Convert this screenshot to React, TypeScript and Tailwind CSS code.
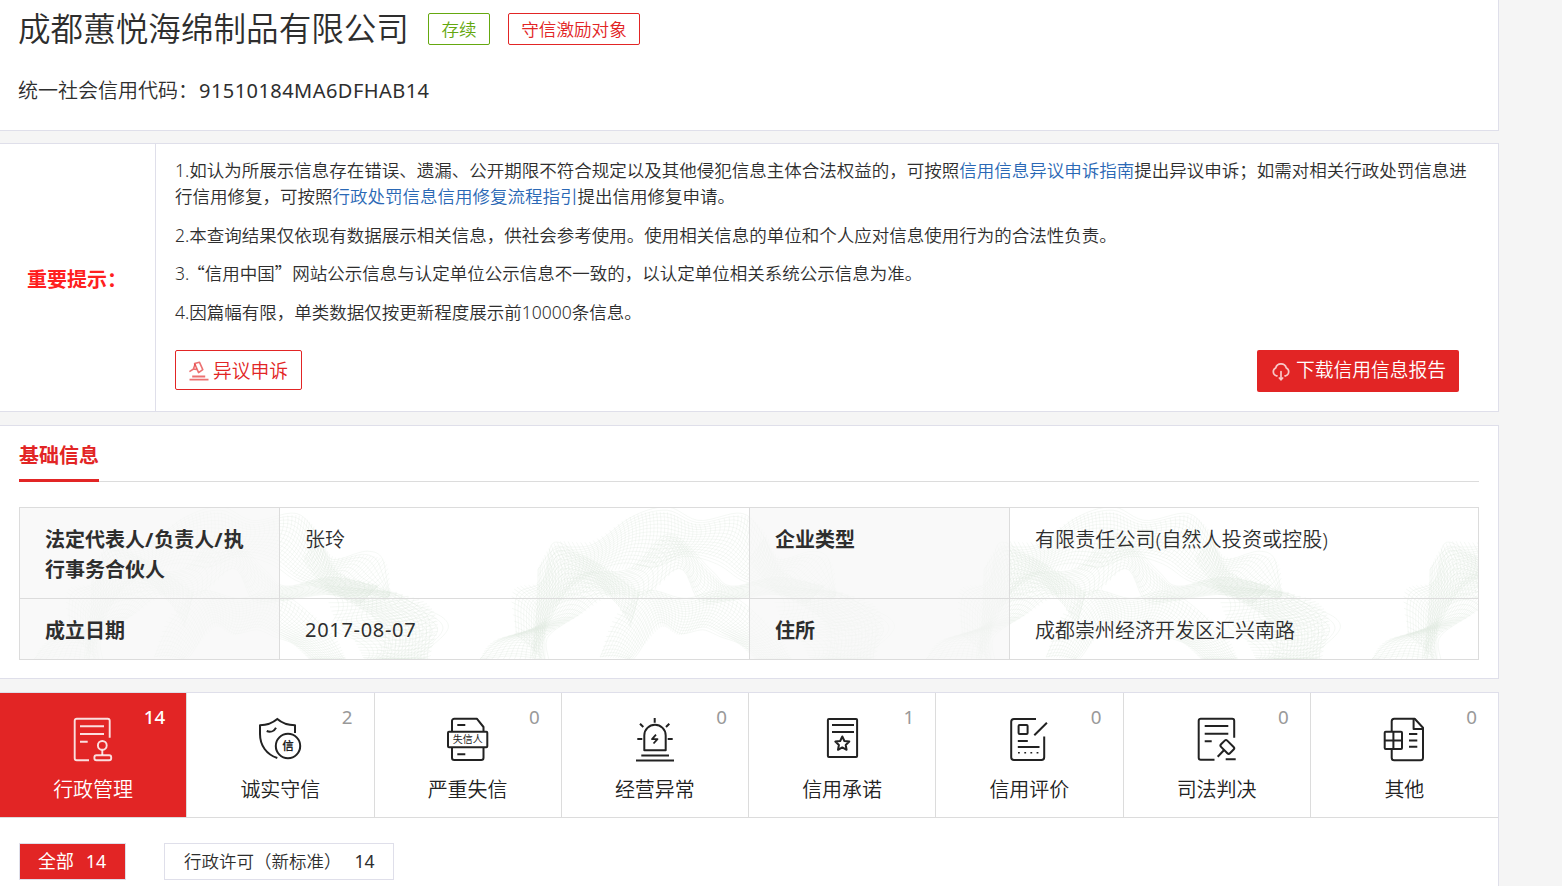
import type { ReactNode } from 'react'

interface Category {
    title: string
    count: number
    icon: ReactNode
}

type Point = [number, number]

interface Ribbon {
    outer: Point[]
    inner: Point[]
    lines: number
    ribs: number
}

// Guilloche ribbons, drawn on a 446 x 152 tile
const RIBBONS: Ribbon[] = [
    {
        outer: [[58, 62], [75, 36], [112, 34], [150, 10], [185, 5], [218, 17], [262, 8], [285, 26], [305, 64], [345, 78]],
        inner: [[52, 150], [80, 92], [110, 70], [142, 62], [172, 62], [205, 47], [240, 52], [265, 72], [290, 84], [325, 98]],
        lines: 15,
        ribs: 84,
    },
    {
        outer: [[0, 152], [14, 134], [60, 116], [95, 68], [150, 62], [190, 30], [230, 66], [252, 80], [300, 70], [360, 84], [400, 108], [396, 152]],
        inner: [[62, 152], [66, 130], [100, 108], [130, 90], [165, 90], [200, 62], [220, 92], [250, 92], [296, 86], [325, 100], [345, 120], [342, 152]],
        lines: 13,
        ribs: 90,
    },
    {
        outer: [[36, 128], [33, 84], [62, 74], [75, 42], [100, 48], [130, 62], [160, 84]],
        inner: [[62, 152], [66, 118], [75, 100], [95, 90], [120, 82], [136, 96], [150, 120]],
        lines: 12,
        ribs: 50,
    },
    {
        outer: [[120, 150], [135, 110], [165, 82], [205, 94], [240, 88], [275, 105], [300, 128], [312, 152]],
        inner: [[150, 152], [164, 138], [182, 120], [200, 128], [225, 120], [245, 128], [260, 138], [275, 152]],
        lines: 14,
        ribs: 64,
    },
    {
        outer: [[285, 30], [300, 50], [330, 48], [352, 56], [356, 88]],
        inner: [[270, 50], [285, 76], [300, 80], [320, 84], [352, 92]],
        lines: 10,
        ribs: 30,
    },
    {
        outer: [[290, 78], [300, 110], [318, 130], [330, 152]],
        inner: [[350, 84], [392, 96], [404, 122], [392, 152]],
        lines: 16,
        ribs: 26,
    },
]

function pointAt(points: Point[], t: number): Point {
    const last = points.length - 1
    const pos = Math.min(t * last, last - 0.0001)
    const i = Math.floor(pos)
    const f = pos - i
    const a = points[Math.max(i - 1, 0)]
    const b = points[i]
    const c = points[i + 1]
    const d = points[Math.min(i + 2, last)]
    const axis = (k: 0 | 1) =>
        0.5 *
        (2 * b[k] +
            (c[k] - a[k]) * f +
            (2 * a[k] - 5 * b[k] + 4 * c[k] - d[k]) * f * f +
            (3 * b[k] - a[k] - 3 * c[k] + d[k]) * f * f * f)
    return [axis(0), axis(1)]
}

function mix(a: Point, b: Point, k: number): Point {
    return [a[0] + (b[0] - a[0]) * k, a[1] + (b[1] - a[1]) * k]
}

function toPath(points: Point[]) {
    return 'M' + points.map(([x, y]) => `${x.toFixed(1)} ${y.toFixed(1)}`).join('L')
}

function ribbonPath({ outer, inner, lines, ribs }: Ribbon) {
    const paths: string[] = []
    for (let n = 0; n <= lines; n++) {
        const curve: Point[] = []
        for (let s = 0; s <= 60; s++) {
            const t = s / 60
            const k = n / lines + 0.12 * Math.sin(t * 9 + (n / lines) * 2)
            curve.push(mix(pointAt(outer, t), pointAt(inner, t), k))
        }
        paths.push(toPath(curve))
    }
    for (let n = 0; n <= ribs; n++) {
        const t = n / ribs
        const rib: Point[] = []
        for (let s = 0; s <= 8; s++) {
            const shift = Math.min(1, t + 0.02 * Math.sin((s / 8) * Math.PI))
            rib.push(mix(pointAt(outer, shift), pointAt(inner, shift), s / 8))
        }
        paths.push(toPath(rib))
    }
    return paths.join('')
}

const GUILLOCHE = RIBBONS.map(ribbonPath).join('')

function Watermark() {
    return (
        <svg className="absolute inset-0 h-full w-full" aria-hidden="true">
            <defs>
                <path id="guilloche" d={GUILLOCHE} fill="none" stroke="#dce6dc" strokeOpacity="0.4" strokeWidth="0.7" />
            </defs>
            <use href="#guilloche" x="15" />
            <use href="#guilloche" x="461" />
            <use href="#guilloche" x="907" />
            <use href="#guilloche" x="1353" />
        </svg>
    )
}

function TabIcon({ children }: { children: ReactNode }) {
    return (
        <svg
            viewBox="0 0 44 46"
            className="h-[46px] w-11"
            fill="none"
            stroke="currentColor"
            strokeWidth="2"
            strokeLinejoin="round"
        >
            {children}
        </svg>
    )
}

const CATEGORIES: Category[] = [
    {
        title: '行政管理',
        count: 14,
        icon: (
            <TabIcon>
                <g strokeWidth="1.9" strokeOpacity="0.85">
                    <path d="M18 43.3H5.7a2 2 0 0 1-2-2V3.7a2 2 0 0 1 2-2h31a2 2 0 0 1 2 2v17" />
                    <path d="M9 9.3h24M9 17h24M9 24.7h7.7" />
                    <circle cx="31.3" cy="28.4" r="4.4" />
                    <path d="M31.3 33v5" />
                    <rect x="23.4" y="38.3" width="16.8" height="5" rx="2" />
                </g>
            </TabIcon>
        ),
    },
    {
        title: '诚实守信',
        count: 2,
        icon: (
            <TabIcon>
                <path d="M37 16V8.2C30 8 24 6 19.3 1.9 14.5 6 9 8 2 8.2V17c0 11.5 6.5 20.5 17.3 24" />
                <path d="M8.7 14c3.3 1.5 7.3.5 9.3-3.3" />
                <circle cx="30" cy="29" r="12.2" />
                <text
                    x="30"
                    y="33.2"
                    fontSize="11.5"
                    fontWeight="700"
                    textAnchor="middle"
                    fill="currentColor"
                    stroke="none"
                >
                    信
                </text>
            </TabIcon>
        ),
    },
    {
        title: '严重失信',
        count: 0,
        icon: (
            <TabIcon>
                <path d="M6 14.5V4a2.3 2.3 0 0 1 2.3-2.3h22.5l6.7 8.3v4.5" />
                <path d="M6 30.5v10.2A2.3 2.3 0 0 0 8.3 43h26.9a2.3 2.3 0 0 0 2.3-2.3V30.5" />
                <rect x="2" y="14.7" width="39.3" height="15.6" rx="1" />
                <path d="M11.3 8h8M11.3 37.3h8" />
                <text x="21.8" y="26" fontSize="10" textAnchor="middle" fill="currentColor" stroke="none">
                    失信人
                </text>
            </TabIcon>
        ),
    },
    {
        title: '经营异常',
        count: 0,
        icon: (
            <TabIcon>
                <path d="M11.3 33.3V18.4a10.7 10.7 0 0 1 21.4 0v14.9z" />
                <path d="M8.3 38.5h27.7M3 43.6h38" />
                <path d="M21.7 1v4.7M7 6.7l3.3 3.3M36.3 6.7L33 10M4.3 22h5M34.7 22h5" />
                <path d="M23 17.7l-4 4.4h5.5l-4 4.4" strokeWidth="1.8" />
            </TabIcon>
        ),
    },
    {
        title: '信用承诺',
        count: 1,
        icon: (
            <TabIcon>
                <rect x="7.9" y="1.9" width="29.2" height="38.2" rx="1" />
                <path d="M12 8h22M12 15h22" />
                <path d="M22.3 19.5l2.1 4.5 4.9.6-3.6 3.4.9 4.8-4.3-2.4-4.3 2.4.9-4.8-3.6-3.4 4.9-.6z" />
            </TabIcon>
        ),
    },
    {
        title: '信用评价',
        count: 0,
        icon: (
            <TabIcon>
                <path d="M29 1.9H7a2.8 2.8 0 0 0-2.8 2.8v35.6a2.8 2.8 0 0 0 2.8 2.8h27.4a2.8 2.8 0 0 0 2.8-2.8V19.5" />
                <rect x="11.6" y="8" width="9" height="9" rx="1" />
                <path d="M27.3 18.3L39.9 5.7M10.8 24h10M10.8 30h21.7" />
                <path d="M11 35.7h1.8M17.3 35.7h1.8M23.4 35.7h1.8M29.6 35.7h1.8" strokeWidth="1.6" />
            </TabIcon>
        ),
    },
    {
        title: '司法判决',
        count: 0,
        icon: (
            <TabIcon>
                <path d="M19.5 42.7H5.7a2 2 0 0 1-2-2v-37a2 2 0 0 1 2-2h31.5a2 2 0 0 1 2 2v17" />
                <path d="M9.7 9h23.6M9.7 16.7h23.6M9.7 24.3h7M22.7 39.7l6.2-6.5M30.7 42.3h10" />
                <rect x="26.2" y="25.5" width="12.6" height="8.8" rx="1.8" transform="rotate(45 32.4 29.7)" />
            </TabIcon>
        ),
    },
    {
        title: '其他',
        count: 0,
        icon: (
            <TabIcon>
                <path d="M9.7 14.5V4.2a2.5 2.5 0 0 1 2.5-2.5h20.5l8.3 9v30a2.5 2.5 0 0 1-2.5 2.5H12.2a2.5 2.5 0 0 1-2.5-2.5v-8.2" />
                <path d="M31.6 2v10h9.5" />
                <rect x="2.7" y="14.7" width="17.3" height="17.3" rx="1" />
                <path d="M11.4 14.7V32M2.7 23.4H20M27 17h8.3M27 23.4h8.3M27 29.7h8.3" />
            </TabIcon>
        ),
    },
]

function GavelIcon() {
    return (
        <svg viewBox="0 0 20 20" className="h-5 w-5" fill="none" stroke="#e22525" strokeOpacity="0.65" strokeWidth="1.6">
            <path d="M5.6 2.6l4.8-1.4 3.4 7.4-4.2 3z" strokeLinejoin="round" />
            <path d="M.4 10.6l4-2.6 3.2.4M4.4 8l1.8-5" />
            <path d="M3.2 15.5h13M.5 18.6h19" strokeWidth="1.8" />
        </svg>
    )
}

function CloudIcon() {
    return (
        <svg
            viewBox="0 0 20 20"
            className="h-5 w-5"
            fill="none"
            stroke="#fff"
            strokeOpacity="0.75"
            strokeWidth="1.7"
            strokeLinecap="round"
        >
            <path d="M6 14.8h-.8A4.2 4.2 0 0 1 4.7 7 5.5 5.5 0 0 1 15.3 7a4.2 4.2 0 0 1-.5 7.8H14" />
            <path d="M10 10.5v8M8.3 17l1.7 1.7 1.7-1.7" />
        </svg>
    )
}

export default function App() {
    return (
        <div className="h-[886px] overflow-hidden bg-[#f5f5f5] font-['Noto_Sans','Noto_Sans_CJK_SC',sans-serif] text-[#2e2e2e]">
            <div className="flex w-[1499px] flex-col">
                <header className="h-[131px] border-r border-b border-[#dfdfea] bg-white pl-[18px]">
                    <div className="flex h-[58px] items-center">
                        <h1 className="w-[392px] text-[32.6px] leading-[58px] font-[350] whitespace-nowrap">
                            成都蕙悦海绵制品有限公司
                        </h1>
                        <span className="ml-[18px] h-8 w-[62px] rounded-xs border border-[#65a80f] text-center text-[17.6px] leading-[31px] font-[350] text-[#65a80f]">
                            存续
                        </span>
                        <span className="ml-[18px] h-8 w-[132px] rounded-xs border border-[#e22525] text-center text-[17.6px] leading-[31px] font-[350] text-[#e22525]">
                            守信激励对象
                        </span>
                    </div>
                    <p className="mt-[18px] text-[20px] leading-[30px] font-[350]">
                        统一社会信用代码：
                        <span className="ml-px font-normal tracking-[0.45px]">91510184MA6DFHAB14</span>
                    </p>
                </header>

                <section className="mt-3 flex h-[269px] border border-l-0 border-[#dfdfea] bg-white">
                    <div className="flex w-[156px] items-center justify-center border-r border-[#dfdfea] pt-1 pr-px text-[20px] font-bold text-[#ff2020]">
                        重要提示：
                    </div>
                    <div className="flex-1 pt-[13px] pl-[19px] text-[17.5px] leading-[26.25px] font-[350]">
                        <div className="flex w-[1300px] flex-col gap-[12.25px]">
                            <p>
                                1.如认为所展示信息存在错误、遗漏、公开期限不符合规定以及其他侵犯信息主体合法权益的，可按照
                                <a className="text-[#2a68b5]">信用信息异议申诉指南</a>
                                提出异议申诉；如需对相关行政处罚信息进行信用修复，可按照
                                <a className="text-[#2a68b5]">行政处罚信息信用修复流程指引</a>
                                提出信用修复申请。
                            </p>
                            <p>
                                2.本查询结果仅依现有数据展示相关信息，供社会参考使用。使用相关信息的单位和个人应对信息使用行为的合法性负责。
                            </p>
                            <p>
                                3.<span className="-ml-0.5 font-['Noto_Sans_CJK_SC']">“</span>信用中国
                                <span className="font-['Noto_Sans_CJK_SC']">”</span>
                                网站公示信息与认定单位公示信息不一致的，以认定单位相关系统公示信息为准。
                            </p>
                            <p>4.因篇幅有限，单类数据仅按更新程度展示前10000条信息。</p>
                        </div>
                        <div className="mt-[25px] flex w-[1284px] items-start justify-between text-[18.75px]">
                            <button className="flex h-10 w-[127px] items-center gap-1 rounded-xs border border-[#e22525] pt-0.5 pl-[13px] text-[#e22525]">
                                <GavelIcon />
                                异议申诉
                            </button>
                            <button className="flex h-[42px] w-[202px] items-center gap-[5px] rounded-xs bg-[#e22525] pl-3.5 text-white">
                                <CloudIcon />
                                <span className="pb-0.5">下载信用信息报告</span>
                            </button>
                        </div>
                    </div>
                </section>

                <section className="mt-[13px] h-[254px] border border-l-0 border-[#dfdfea] bg-white px-[19px]">
                    <div className="flex h-14 border-b border-[#dcdcdc]">
                        <h2 className="h-14 border-b-3 border-[#e22525] text-[20px] leading-[60px] font-bold text-[#e22525]">
                            基础信息
                        </h2>
                    </div>
                    <div className="relative mt-[25px] h-[153px] w-[1460px]">
                        <Watermark />
                        <dl className="relative grid h-full grid-cols-[260px_470px_260px_1fr] grid-rows-[91px_1fr] border border-[#dcdcdc] text-[20px] leading-[30px]">
                            <dt className="border-r border-b border-[#dcdcdc] bg-[#f7f7f7]/70 pt-[17px] pl-[25px] font-bold">
                                法定代表人<span className="tracking-[1px]">/</span>负责人<span className="tracking-[1px]">/</span>执
                                <br />
                                行事务合伙人
                            </dt>
                            <dd className="border-r border-b border-[#dcdcdc] pt-[17px] pl-[25px] font-[350]">张玲</dd>
                            <dt className="border-r border-b border-[#dcdcdc] bg-[#f7f7f7]/70 pt-[17px] pl-[25px] font-bold">企业类型</dt>
                            <dd className="border-b border-[#dcdcdc] pt-[17px] pl-[25px] font-[350] tracking-[0.12px]">
                                有限责任公司(自然人投资或控股)
                            </dd>
                            <dt className="border-r border-[#dcdcdc] bg-[#f7f7f7]/70 pt-[17px] pl-[25px] font-bold">成立日期</dt>
                            <dd className="border-r border-[#dcdcdc] pt-4 pl-[25px] tracking-[0.7px]">2017-08-07</dd>
                            <dt className="border-r border-[#dcdcdc] bg-[#f7f7f7]/70 pt-[17px] pl-[25px] font-bold">住所</dt>
                            <dd className="pt-[17px] pl-[25px] font-[350]">成都崇州经济开发区汇兴南路</dd>
                        </dl>
                    </div>
                </section>

                <section className="mt-[13px] h-[194px] border-t border-r border-[#dfdfea] bg-white">
                    <nav className="grid h-[125px] grid-cols-8 border-b border-[#dcdcdc]">
                        {CATEGORIES.map(({ title, count, icon }, index) => (
                            <a
                                key={title}
                                className={`relative flex flex-col items-center border-[#dcdcdc] pt-6 ${
                                    index === 0 ? 'bg-[#e22525] text-white' : 'text-[#222]'
                                } ${index < CATEGORIES.length - 1 ? 'border-r' : ''}`}
                            >
                                {icon}
                                <span className="mt-3 text-[20px] leading-[30px] font-[350]">{title}</span>
                                <span
                                    className={`absolute top-2.5 right-[21px] text-[18.75px] leading-7 ${
                                        index === 0 ? 'font-medium text-white' : 'text-[#999]'
                                    }`}
                                >
                                    {count}
                                </span>
                            </a>
                        ))}
                    </nav>
                    <div className="mt-[25px] flex gap-[38px] pl-[19px] text-[17.5px] leading-[35px]">
                        <span className="flex h-[37px] w-[107px] gap-3 border border-[#dfdfea] bg-[#e22525] pl-[18px] text-[17.9px] text-white">
                            <span>全部</span>
                            <span>14</span>
                        </span>
                        <span className="flex h-[37px] w-[230px] gap-[13px] border border-[#dfdfea] pl-[19px]">
                            <span className="font-[350]">行政许可（新标准）</span>
                            <span>14</span>
                        </span>
                    </div>
                </section>
            </div>
        </div>
    )
}
